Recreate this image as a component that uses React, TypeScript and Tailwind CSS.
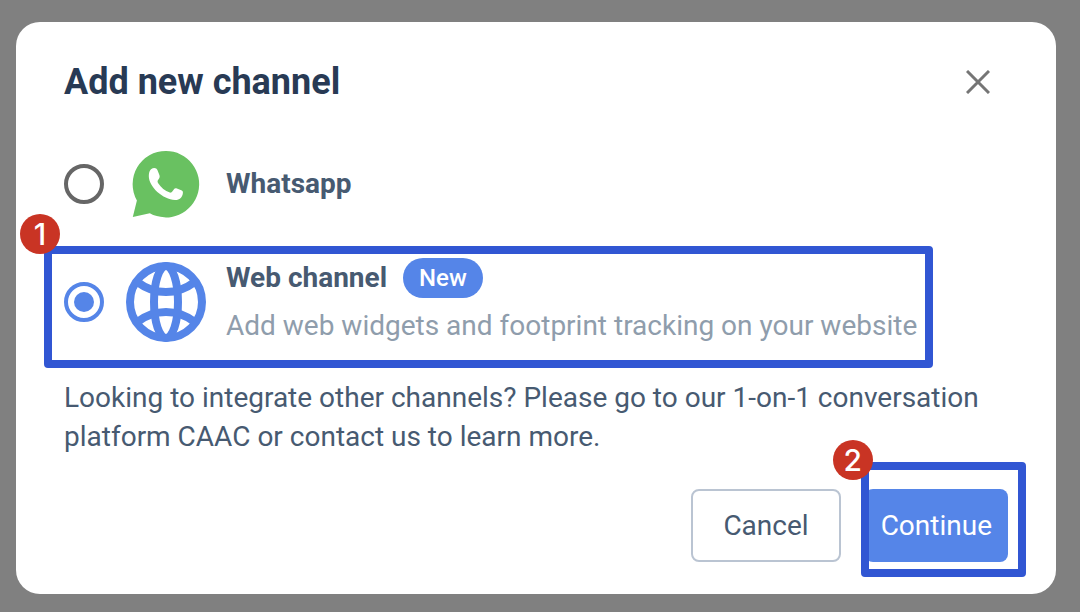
import { useState, type ReactNode } from 'react'

type ChannelId = 'whatsapp' | 'web'

interface Channel {
  id: ChannelId
  name: string
  description?: string
  isNew?: boolean
  icon: ReactNode
}

function WhatsappIcon() {
  return (
    <svg viewBox="0 0 80 80" className="size-20 shrink-0" aria-hidden="true">
      <path
        fill="#69c161"
        d="M40 7a33.2 33.2 0 1 1-16.200 62.200L6.800 73l4.100-16.500A33.2 33.2 0 0 1 40 7z"
      />
      <path
        fill="#fff"
        d="M25 25.2C27.500 23.300 30.500 23.600 31.400 26L33.400 31C34 32.800 33.600 34 32.600 35.200C31.300 36.700 31.300 37.700 32.200 39.200C35 43.500 39 46.800 43.800 48.600C45 49 45.600 48.600 46.300 47.600L47.800 45.400C48.600 44.200 49.600 43.900 50.900 44.400L55.300 46.200C56.600 46.800 57.100 47.600 56.900 49C56.300 53.800 53.200 56.200 49 56C37 55.500 22.800 43 22.800 32C22.800 29 23.500 26.600 25 25.200Z"
      />
    </svg>
  )
}

function GlobeIcon() {
  return (
    <svg viewBox="0 0 80 80" className="size-20 shrink-0" fill="none" stroke="#5585e8" strokeWidth="8" aria-hidden="true">
      <circle cx="40" cy="40" r="36" />
      <ellipse cx="40" cy="40" rx="12" ry="36" />
      <path d="M12 20.500C20 26.500 30 30 40 30s20-3.500 28-9.500M12 59.500C20 53.500 30 50 40 50s20 3.500 28 9.500" />
    </svg>
  )
}

const channels: Channel[] = [
  { id: 'whatsapp', name: 'Whatsapp', icon: <WhatsappIcon /> },
  {
    id: 'web',
    name: 'Web channel',
    description: 'Add web widgets and footprint tracking on your website',
    isNew: true,
    icon: <GlobeIcon />,
  },
]

function StepBadge({ step, className }: { step: number; className: string }) {
  return (
    <span
      className={`absolute flex size-10 items-center justify-center rounded-full bg-[#c93424] font-[Inter,sans-serif] text-3xl leading-none font-medium text-white ${className}`}
    >
      {step}
    </span>
  )
}

export default function App() {
  const [selected, setSelected] = useState<ChannelId>('web')

  return (
    <div className="min-h-screen bg-[#808080] pt-[22px] pr-6 pb-[18px] pl-4 font-[Roboto,sans-serif] text-[28px] text-[#475a71]">
      <div role="dialog" aria-labelledby="dialog-title" className="rounded-3xl bg-white px-12 pt-8 pb-8">
        <div className="flex items-center justify-between">
          <h1 id="dialog-title" className="text-4xl leading-14 font-bold text-[#283a54]">
            Add new channel
          </h1>
          <button type="button" aria-label="Close" className="mr-2.5 p-2">
            <svg viewBox="0 0 24 24" className="size-6" stroke="#757575" strokeWidth="3" aria-hidden="true">
              <path d="M1 1l22 22M23 1L1 23" />
            </svg>
          </button>
        </div>

        <div className="mt-[34px] flex flex-col items-start gap-[30px]">
          {channels.map((channel) => (
            <label key={channel.id} className="relative flex items-center">
              <input
                type="radio"
                name="channel"
                checked={selected === channel.id}
                onChange={() => setSelected(channel.id)}
                className="size-10 shrink-0 appearance-none rounded-full border-4 border-[#666666] bg-clip-content p-1.5 checked:border-[#5585e8] checked:bg-[#5585e8]"
              />
              <span className="mr-5 ml-[22px]">{channel.icon}</span>
              <span>
                <span className="flex items-center gap-4 leading-12 font-bold">
                  {channel.name}
                  {channel.isNew && (
                    <span className="rounded-full bg-[#5585e8] px-4 text-2xl leading-10 font-medium text-white">New</span>
                  )}
                </span>
                {channel.description && (
                  <span className="block leading-12 text-[#8f9dac]">{channel.description}</span>
                )}
              </span>
              {channel.id === 'web' && (
                <span className="pointer-events-none absolute -top-2 -right-4 -bottom-[18px] -left-5 rounded border-8 border-[#3156d3]">
                  <StepBadge step={1} className="-top-10 -left-8" />
                </span>
              )}
            </label>
          ))}
        </div>

        <p className="mt-7 leading-[39px]">
          Looking to integrate other channels? Please go to our 1-on-1 conversation platform CAAC or contact us to learn
          more.
        </p>

        <div className="mt-[33px] flex justify-end gap-6">
          <button type="button" className="rounded-lg border-2 border-[#bac4d2] px-[30px] leading-[69px]">
            Cancel
          </button>
          <div className="relative flex">
            <button type="button" className="rounded-lg bg-[#5585e8] px-4 text-white">
              Continue
            </button>
            <span className="pointer-events-none absolute -top-[27px] -right-[18px] -bottom-[15px] -left-1 rounded border-8 border-[#3156d3]">
              <StepBadge step={2} className="-top-[30px] -left-9" />
            </span>
          </div>
        </div>
      </div>
    </div>
  )
}
